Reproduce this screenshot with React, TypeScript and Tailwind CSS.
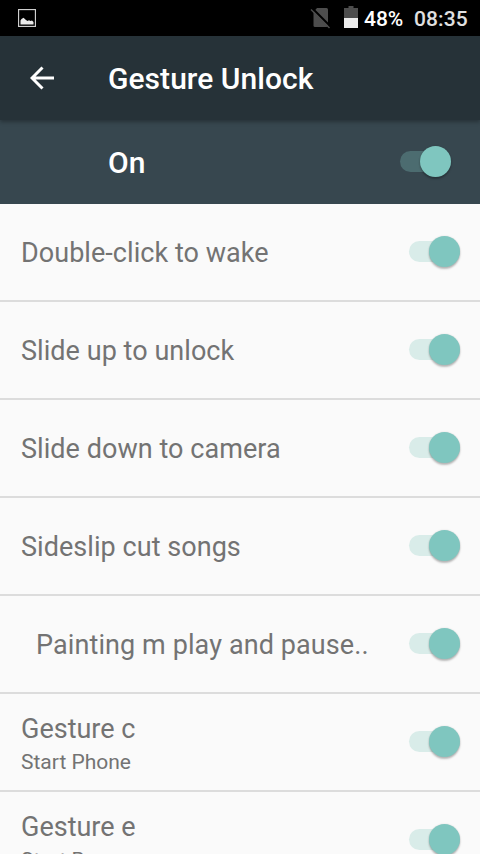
const rows = [
  { title: 'Double-click to wake' },
  { title: 'Slide up to unlock' },
  { title: 'Slide down to camera' },
  { title: 'Sideslip cut songs' },
  { title: 'Painting m play and pause..', indent: true },
  { title: 'Gesture c', summary: 'Start Phone' },
  { title: 'Gesture e', summary: 'Start Browser' },
];

function Toggle({ track }: { track: string }) {
  return (
    <div className={`mb-px flex h-[21px] w-[51px] shrink-0 items-center justify-end rounded-full ${track}`}>
      <div className="h-[31px] w-[31px] shrink-0 rounded-full bg-[#7fc6bf] shadow-[0_2px_2px_rgba(0,0,0,0.25),0_0_2px_rgba(0,0,0,0.12)]" />
    </div>
  );
}

export default function App() {
  return (
    <div className="flex h-[854px] w-[480px] flex-col overflow-hidden bg-[#fafafa] font-[Roboto,sans-serif]">
      {/* Status bar */}
      <div className="flex h-9 shrink-0 items-center bg-black pl-[18px]">
        <svg className="h-[18px] w-[18px]" viewBox="0 0 18 18">
          <rect x="0.5" y="0.5" width="17" height="17" fill="none" stroke="#cfcfcf" strokeWidth="1.3" />
          <path d="M2.5 15.5v-4l1-1.5 2-1.2L8 11l1.5 1 1.5-.8 1.5.8 1.5-.6 1.500 1.600v2.500z" fill="#ececec" />
        </svg>
        <svg className="mb-px ml-[274px] h-[22px] w-5 shrink-0" viewBox="0 0 20 22">
          <path d="M7 1h9.500q1.500 0 1.500 1.500V18.500q0 1.500-1.500 1.500H5q-1.500 0-1.500-1.500V5z" fill="#4d4d4d" />
          <path d="M2 1l19 19" stroke="#000" strokeWidth="2.200" />
          <path d="M1 2.500l18.500 18.500" stroke="#4d4d4d" strokeWidth="1.500" />
        </svg>
        <svg className="mb-[2px] ml-[14px] h-[22px] w-[14px] shrink-0" viewBox="0 0 14 22">
          <path d="M4.500 0h5v2H14v11H0V2h4.500z" fill="#4d4d4d" />
          <path d="M0 12h14v10H0z" fill="#ececec" />
        </svg>
        <span className="mt-1 ml-1.5 w-[50px] shrink-0 text-[21px] font-medium text-white">48%</span>
        <span className="mt-1 shrink-0 text-[21px] font-medium tracking-[0.1px] text-[#e0e0e0]">08:35</span>
      </div>

      {/* Toolbar */}
      <header className="relative flex h-[84px] shrink-0 items-center bg-[#263238] pl-[30px] shadow-[0_2px_4px_rgba(0,0,0,0.3)]">
        <svg className="h-6 w-6" viewBox="0 0 24 24" fill="none" stroke="#fff" strokeWidth="3">
          <path d="M24 12H2M12.500 1.500L2 12l10.500 10.500" />
        </svg>
        <h1 className="ml-[54px] text-[30px] font-medium tracking-[0.05px] text-white">Gesture Unlock</h1>
      </header>

      <div className="flex h-[84px] shrink-0 items-center justify-between bg-[#37474f] pr-[29px] pl-[108px]">
        <span className="text-[30px] font-medium text-white">On</span>
        <Toggle track="bg-[#4c6c70]" />
      </div>

      <main>
        {rows.map(row => (
          <div key={row.title} className="flex h-[98px] items-center justify-between border-b-2 border-[#dcdcdc] pr-5 pl-[21px]">
            <div className={row.indent ? 'pt-[2px] pl-[15px] tracking-[0.1px]' : row.summary ? 'pt-2' : 'pt-[2px] tracking-[0.05px]'}>
              <p className="text-[27px] leading-8 text-[#737373]">{row.title}</p>
              {row.summary && <p className="text-[21px] leading-[34px] text-[#737373]">{row.summary}</p>}
            </div>
            <Toggle track="bg-[#d9ece9]" />
          </div>
        ))}
      </main>
    </div>
  );
}
